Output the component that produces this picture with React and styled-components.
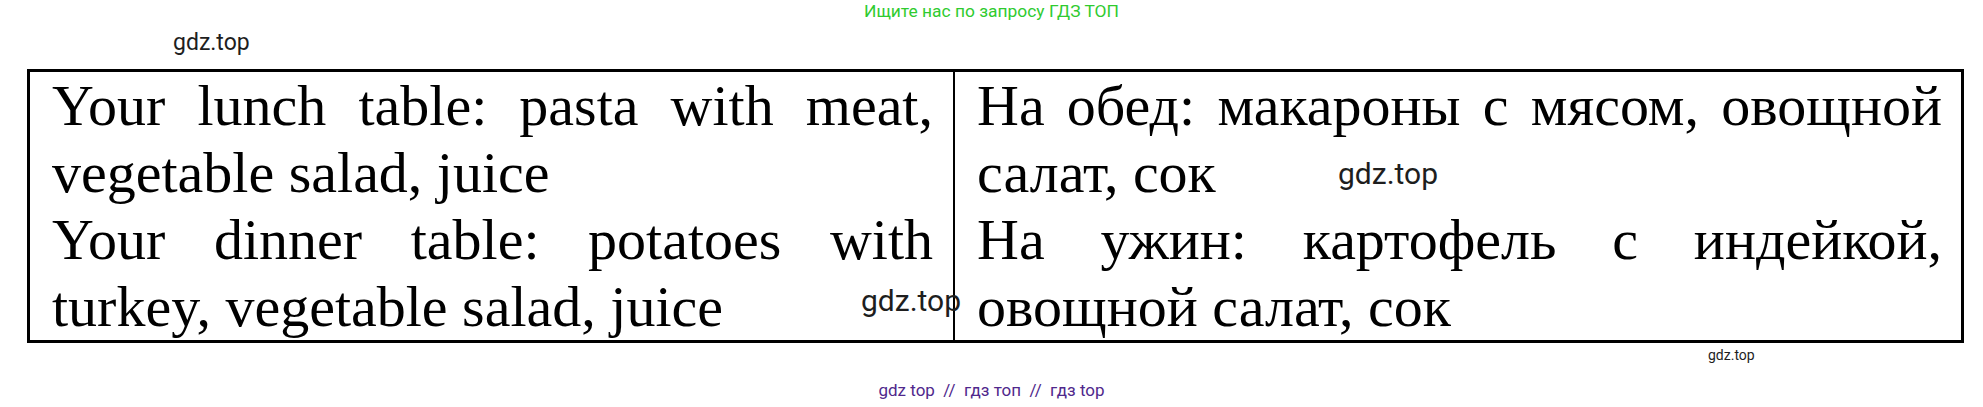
import React from 'react';
import styled, { createGlobalStyle } from 'styled-components';

const GlobalStyle = createGlobalStyle`
  html, body {
    margin: 0;
    padding: 0;
    background: #ffffff;
  }
`;

const Page = styled.div`
  position: relative;
  width: 1983px;
  height: 407px;
  overflow: hidden;
  background: #ffffff;
  display: flex;
  flex-direction: column;
`;

const SearchHint = styled.div`
  padding-top: 1px;
  text-align: center;
  font-family: Roboto, "Noto Sans", sans-serif;
  font-size: 17.4px;
  line-height: 20px;
  color: #2fcb2f;
`;

const Table = styled.div`
  margin: 48px 0 0 27px;
  width: 1931px;
  border: 3px solid #000;
  display: grid;
  grid-template-columns: 923px 1fr;
`;

const Cell = styled.div`
  padding: 0 ${p => p.$padRight}px 0 22px;
  border-left: ${p => (p.$divider ? '2px solid #000' : 'none')};
  font-family: "Liberation Serif", "Times New Roman", serif;
  font-size: 58px;
  line-height: 67px;
  color: #000;
`;

const Line = styled.div`
  white-space: nowrap;
  text-align: ${p => (p.$justify ? 'justify' : 'left')};
  text-align-last: ${p => (p.$justify ? 'justify' : 'left')};
`;

const Footer = styled.div`
  margin-top: 37px;
  text-align: center;
  font-family: Roboto, "Noto Sans", sans-serif;
  font-size: 17px;
  line-height: 20px;
  color: #50288c;
  white-space: pre;
`;

const Watermark = styled.div`
  position: absolute;
  left: ${p => p.$x}px;
  top: ${p => p.$y}px;
  font-family: Roboto, "Noto Sans", sans-serif;
  font-size: ${p => p.$size}px;
  line-height: 1.17;
  color: #1e1e1e;
  white-space: nowrap;
  pointer-events: none;
`;

const rows = {
  left: [
    ['Your lunch table: pasta with meat,', true],
    ['vegetable salad, juice', false],
    ['Your dinner table: potatoes with', true],
    ['turkey, vegetable salad, juice', false],
  ],
  right: [
    ['На обед: макароны с мясом, овощной', true],
    ['салат, сок', false],
    ['На ужин: картофель с индейкой,', true],
    ['овощной салат, сок', false],
  ],
};

const marks = [
  { x: 173, y: 30, size: 23 },
  { x: 1338, y: 156, size: 30 },
  { x: 861, y: 283, size: 30 },
  { x: 1708, y: 347, size: 14 },
];

export default function App() {
  return (
    <>
      <GlobalStyle />
      <Page>
        <SearchHint>Ищите нас по запросу ГДЗ ТОП</SearchHint>
        <Table>
          <Cell $padRight={20}>
            {rows.left.map(([text, justify], i) => (
              <Line key={i} $justify={justify}>{text}</Line>
            ))}
          </Cell>
          <Cell $divider $padRight={19}>
            {rows.right.map(([text, justify], i) => (
              <Line key={i} $justify={justify}>{text}</Line>
            ))}
          </Cell>
        </Table>
        <Footer>{'gdz top  //  гдз топ  //  гдз top'}</Footer>
        {marks.map((m, i) => (
          <Watermark key={i} $x={m.x} $y={m.y} $size={m.size}>gdz.top</Watermark>
        ))}
      </Page>
    </>
  );
}
